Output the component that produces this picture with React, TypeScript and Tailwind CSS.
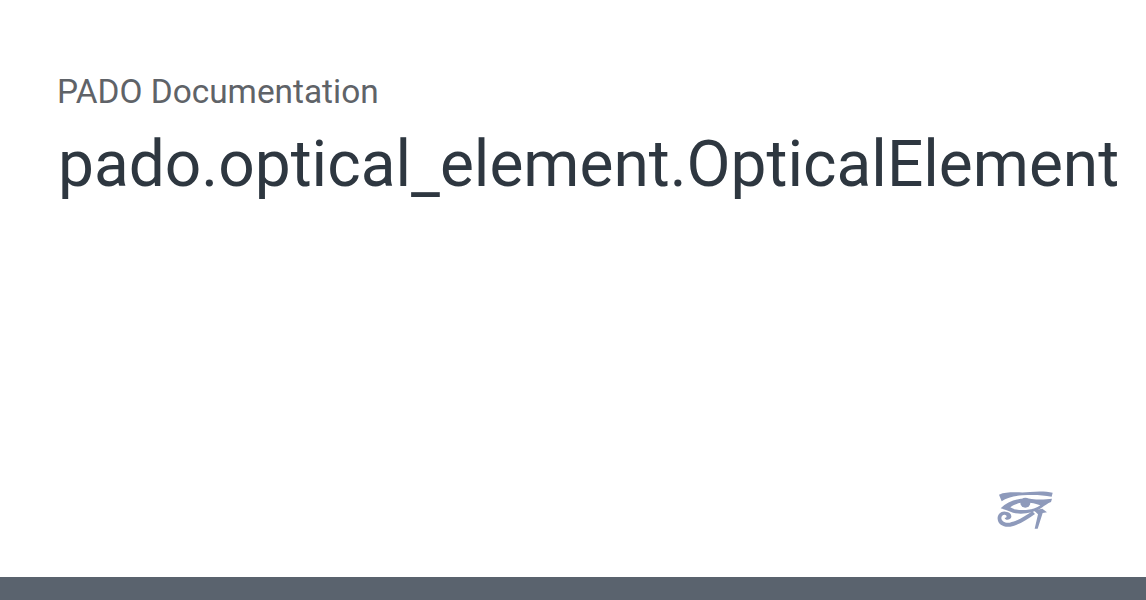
export default function App() {
  return (
    <div className="h-[600px] w-[1146px] flex flex-col bg-white overflow-hidden font-['Roboto',sans-serif]">
      <div className="flex-1 flex flex-col pl-[57px] pt-[70px]">
        <div className="text-[33.4px] leading-[44px] text-[#5f6368]">PADO Documentation</div>
        <h1 className="mt-[13px] ml-[1px] text-[64px] leading-[76px] whitespace-nowrap text-[#2e3740]">
          pado.optical<span className="inline-block translate-y-[6px]">_</span>element.OpticalElement
        </h1>
        {/* eye of horus logo */}
        <div className="mt-auto mb-[39px] ml-[928px] w-[80px] h-[60px]">
          <svg viewBox="0 0 240 180" className="w-[80px] h-[60px]" fill="#8e9abb">
            <path d="M42 50 C70 38 105 46 135 42 C160 39 185 40 203 44 L200 56 C170 50 140 50 112 52 C90 53 65 58 50 70 Z" />
            <path fillRule="evenodd" d="M47 91 C70 68 105 58 140 63 C165 66 185 64 201 62 L198 72 C188 76 180 82 172 88 C150 104 110 112 84 104 C72 100 58 94 47 91 Z M76 88 C90 100 145 100 166 82 C140 72 100 68 76 88 Z" />
            <circle cx="121" cy="74" r="15" />
            <path d="M66 102 C50 96 36 108 38 124 C40 140 56 149 76 146 C100 141 126 126 150 108 L142 100 C122 114 96 130 74 134 C60 136 50 130 49 121 C49 114 55 109 61 111 C67 113 65 120 59 119 C60 128 76 127 79 117 C80 109 74 104 66 102 Z" />
            <path d="M146 97 L172 92 L186 103 L173 105 L158 152 L149 152 L159 109 Z" />
          </svg>
        </div>
      </div>
      <div className="h-[23px] bg-[#5a636e]" />
    </div>
  );
}
